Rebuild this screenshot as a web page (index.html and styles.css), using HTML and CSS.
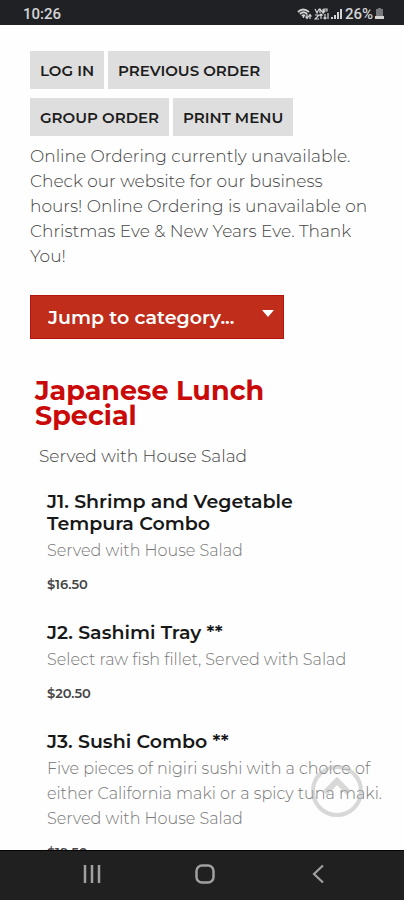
FILE: index.html
```html
<!DOCTYPE html>
<html lang="en">
<head>
<meta charset="utf-8">
<meta name="viewport" content="width=device-width, initial-scale=1">
<title>Online Ordering</title>
<link rel="stylesheet" href="styles.css">
</head>
<body>
<header class="status">
  <span>10:26</span>
  <div class="status-right">
    <svg width="15" height="12" viewBox="0 0 15 12" fill="none" stroke="currentColor">
      <path d="M1 4Q6-1 12 4M3 6Q6.500 2.500 10 6M5 8Q6.500 6.500 8 8" stroke-width="1.800"/>
      <path d="M6.500 10V8M10 6v4M8.500 8.500L10 10.500l1.500-2M13 11V7M11.500 8.500L13 6.500l1.500 2" stroke-width="1.200"/>
    </svg>
    <svg width="15" height="12" viewBox="0 0 15 12" fill="none" stroke="currentColor" stroke-width="1.200">
      <path d="M1 1l2 4 2-4M6 5V1l3 4V1M10 5V1h3v2h-3M1 7h4L1 11h4M7 11V6M5.500 7.500L7 6l1.500 1.500M11 6v5M9.500 9.500L11 11l1.500-1.500M14 5v6"/>
    </svg>
    <svg width="12" height="12" viewBox="0 0 12 12" fill="currentColor">
      <path d="M0 9h2v2H0zM3 7h2v4H3zM6 4h2v7H6zM9 1h2v10H9z"/>
    </svg>
    <span>26%</span>
    <svg width="9" height="12" viewBox="0 0 9 12">
      <path d="M3 0h3v1h2v7H1V1h2z" fill="#77787a"/>
      <path d="M0 8h9v3H0z" fill="currentColor"/>
    </svg>
  </div>
</header>

<main class="page">
  <div class="actions">
    <button type="button">LOG IN</button>
    <button type="button">PREVIOUS ORDER</button>
    <button type="button">GROUP ORDER</button>
    <button type="button">PRINT MENU</button>
  </div>
  <p class="notice">Online Ordering currently unavailable. Check our website for our business hours! Online Ordering is unavailable on Christmas Eve &amp; New Years Eve. Thank You!</p>

  <div class="jump">
    <select aria-label="Jump to category">
      <option>Jump to category...</option>
      <option>Japanese Lunch Special</option>
    </select>
    <svg class="caret" width="12" height="7" viewBox="0 0 12 7"><path d="M0 0h12L6 7z" fill="#fff"/></svg>
  </div>

  <section class="category">
    <h2>Japanese Lunch Special</h2>
    <p class="category-note">Served with House Salad</p>
    <article class="item">
      <h3>J1. Shrimp and Vegetable Tempura Combo</h3>
      <p class="desc">Served with House Salad</p>
      <p class="price">$16.50</p>
    </article>
    <article class="item">
      <h3>J2. Sashimi Tray **</h3>
      <p class="desc">Select raw fish fillet, Served with Salad</p>
      <p class="price">$20.50</p>
    </article>
    <article class="item">
      <h3>J3. Sushi Combo **</h3>
      <p class="desc">Five pieces of nigiri sushi with a choice of either California maki or a spicy tuna maki. Served with House Salad</p>
      <p class="price">$19.50</p>
    </article>
  </section>
  <button type="button" class="to-top" aria-label="Back to top">
    <svg width="54" height="54" viewBox="0 0 54 54" fill="none" stroke="currentColor" stroke-width="4">
      <circle cx="27" cy="27" r="24"/>
      <path d="M15 29l12-12 12 12" stroke-width="6"/>
    </svg>
  </button>
</main>

<nav class="system-nav">
  <button type="button" aria-label="Recent apps">
    <svg width="20" height="20" viewBox="0 0 20 20" stroke="currentColor" stroke-width="2.500"><path d="M3 1v18M10 1v18M17 1v18"/></svg>
  </button>
  <button type="button" aria-label="Home">
    <svg width="20" height="20" viewBox="0 0 20 20" fill="none" stroke="currentColor" stroke-width="2.500"><rect x="1.500" y="1.500" width="17" height="17" rx="5.500"/></svg>
  </button>
  <button type="button" aria-label="Back">
    <svg width="20" height="20" viewBox="0 0 20 20" fill="none" stroke="currentColor" stroke-width="2.200"><path d="M15 1.500L6 10l9 8.500"/></svg>
  </button>
</nav>
</body>
</html>
```
FILE: styles.css
```css
* { box-sizing: border-box; }

body {
  margin: 0;
  height: 100vh;
  display: flex;
  flex-direction: column;
  background: #fefefe;
  color: #444;
  font-family: Montserrat, Inter, "Open Sans", sans-serif;
}

h2, h3, p { margin: 0; }

button, select { font-family: inherit; border: 0; margin: 0; }

.status {
  flex: none;
  height: 25px;
  padding: 2px 20px 0 23px;
  display: flex;
  align-items: center;
  justify-content: space-between;
  background: #202125;
  color: #d4d4d5;
  font: 500 15px/20px Roboto, sans-serif;
}

.status-right { display: flex; align-items: center; gap: 2px; }

.page {
  position: relative;
  flex: 1;
  min-height: 0;
  overflow: hidden;
  padding: 26px 20px 0 30px;
}

.actions { display: flex; flex-wrap: wrap; gap: 9px 4px; }

.actions button {
  height: 38px;
  padding: 0 10px;
  background: #dedede;
  color: #1c1c1c;
  font-size: 15px;
  font-weight: 600;
}

.notice {
  margin-top: 8px;
  padding-right: 10px;
  font-size: 17px;
  line-height: 25px;
  font-weight: 300;
}

.jump {
  position: relative;
  width: 254px;
  margin-top: 26px;
}

.jump select {
  display: block;
  appearance: none;
  width: 100%;
  height: 44px;
  padding: 0 30px 0 17px;
  border: 1px solid #b5140c;
  border-radius: 0;
  background: #c02d1b;
  color: #fff;
  font-size: 19px;
  font-weight: 600;
}

.caret { position: absolute; right: 10px; top: 15px; }

.category { margin-top: 39px; }

.category h2 {
  padding: 0 40px 0 5px;
  color: #ca0909;
  font-size: 27px;
  line-height: 25px;
  font-weight: 700;
}

.category-note {
  margin: 16px 0 22px;
  padding-left: 9px;
  font-size: 17px;
  line-height: 25px;
  font-weight: 300;
}

.item { margin-bottom: 28px; padding-left: 17px; }

.item h3 {
  margin-bottom: 3px;
  color: #181818;
  font-size: 19px;
  line-height: 22px;
  font-weight: 600;
}

.desc {
  color: #777;
  font-size: 16px;
  line-height: 25px;
  font-weight: 300;
}

.price {
  margin-top: 11px;
  font-size: 13px;
  line-height: 20px;
  font-weight: 600;
}

.to-top {
  position: absolute;
  right: 40px;
  bottom: 32px;
  padding: 0;
  background: none;
  color: #b4b4b4;
  opacity: 0.5;
}

.to-top svg { display: block; }

.system-nav {
  flex: none;
  height: 50px;
  padding: 0 30px 0 35px;
  display: flex;
  align-items: flex-start;
  border-top: 1px solid #050505;
  background: #202020;
  color: #a0a0a0;
}

.system-nav button {
  flex: 1;
  height: 46px;
  padding: 0;
  display: flex;
  align-items: center;
  justify-content: center;
  background: none;
  color: inherit;
}
```
